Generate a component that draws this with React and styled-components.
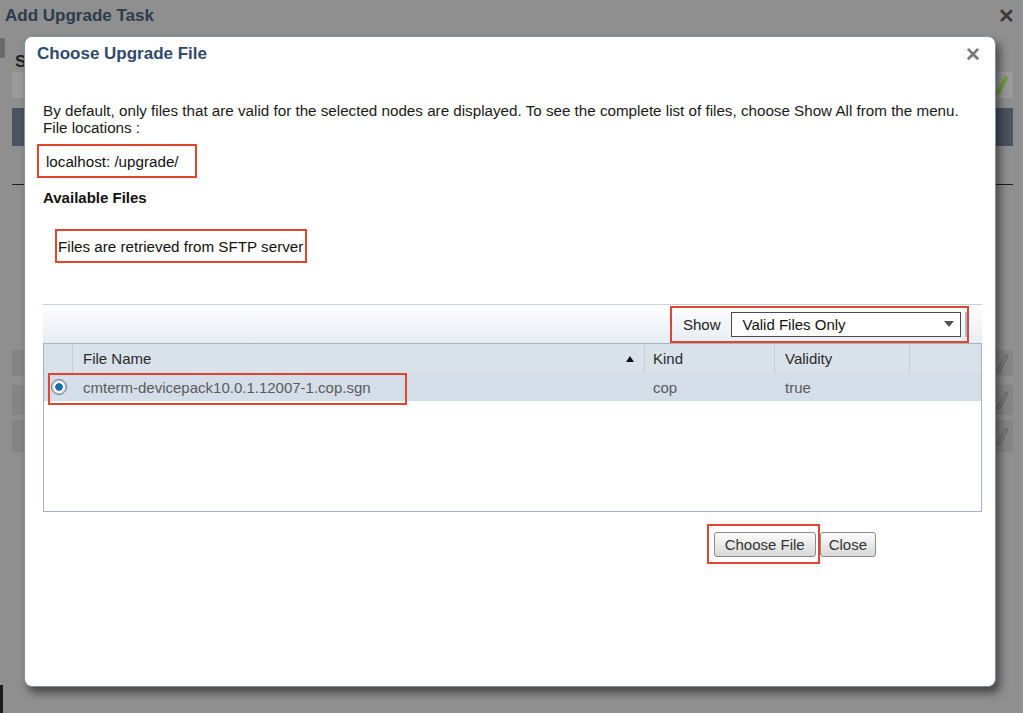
import React from 'react';
import styled, { createGlobalStyle } from 'styled-components';

const GlobalStyle = createGlobalStyle`
html, body {
  margin: 0;
  padding: 0;
  width: 1023px;
  height: 713px;
  overflow: hidden;
  background: #8f8f8f;
  font-family: "Liberation Sans", Arial, sans-serif;
}
`

/* ---- page behind the dialog (dimmed) ---- */
const Page = styled.div`
position: relative;
width: 1023px;
height: 713px;
background: #8f8f8f;
display: flex;
flex-direction: column;
`
const PageHeader = styled.div`
height: 32px;
display: flex;
align-items: center;
justify-content: space-between;
padding: 0 8px 0 5px;
`
const PageTitle = styled.div`
font-size: 17px;
font-weight: bold;
color: #2e3b4b;
`
const PageClose = styled.div`
font-size: 20px;
font-weight: bold;
color: #3a3a3a;
line-height: 1;
`
const PageBody = styled.div`
display: flex;
flex-direction: column;
padding: 6px 10px 0 0;
`
const SideTab = styled.div`
width: 5px;
height: 20px;
background: #6b6b6b;
`
const SectionLetter = styled.div`
margin: -6px 0 0 15px;
font-size: 17px;
font-weight: bold;
color: #222;
`
const BgRow = styled.div`
margin: ${({ top }) => top}px 0 0 12px;
height: ${({ h }) => h}px;
background: ${({ tone }) => tone};
display: flex;
align-items: center;
justify-content: flex-end;
padding-right: 4px;
`
const BgRule = styled.div`
margin: ${({ top }) => top}px 0 0 12px;
height: 1px;
background: #1e1e1e;
`
const Footer = styled.div`
margin-top: auto;
width: 3px;
height: 28px;
background: #1a1a1a;
`

function Pencil({ green }) {
  return (
    <svg width="14" height="20" viewBox="0 0 14 20">
      {green ? (
        <path d="M3 18 L11 3" stroke="#6fa23a" strokeWidth="4" strokeLinecap="round" fill="none" />
      ) : (
        <path d="M2 18 L10 3 Q12 1 12.5 4 L4.5 19 Z" stroke="#6a6a6a" strokeWidth="1.2" fill="none" />
      )}
    </svg>
  );
}

/* ---- dialog ---- */
const Dialog = styled.div`
position: absolute;
left: 24px;
top: 36px;
width: 970px;
height: 649px;
background: #fff;
border: 1px solid #7d8fa3;
border-radius: 8px;
box-shadow: 4px 6px 8px rgba(0, 0, 0, 0.5);
display: flex;
flex-direction: column;
`
const DialogHeader = styled.div`
height: 34px;
display: flex;
align-items: center;
justify-content: space-between;
padding: 0 14px 0 12px;
`
const DialogTitle = styled.div`
font-size: 17px;
font-weight: bold;
color: #2f4a6a;
`
const CloseX = styled.div`
font-size: 19px;
font-weight: bold;
color: #7a7a7a;
line-height: 1;
`
const DialogBody = styled.div`
padding: 0 13px 0 18px;
display: flex;
flex-direction: column;
`
const Intro = styled.div`
margin-top: 31px;
font-size: 15.2px;
line-height: 17px;
color: #1a1a1a;
`
const Callout = styled.div`
align-self: flex-start;
border: 2px solid #e2452f;
margin: ${({ m }) => m};
width: ${({ w }) => w}px;
height: ${({ h }) => h}px;
padding-left: ${({ pl }) => pl}px;
box-sizing: border-box;
display: flex;
align-items: center;
font-size: 15.2px;
color: #111;
`
const SectionHeading = styled.div`
margin-top: 11px;
font-size: 15px;
font-weight: bold;
line-height: 17px;
color: #111;
`
const Toolbar = styled.div`
margin-top: 41px;
height: 39px;
border-top: 1px solid #c9d2da;
background: linear-gradient(#fdfeff, #e7edf3);
display: flex;
justify-content: flex-end;
align-items: center;
padding-right: 13px;
box-sizing: border-box;
`
const ShowBox = styled.div`
height: 37px;
width: 299px;
box-sizing: border-box;
border: 2px solid #e2452f;
display: flex;
align-items: center;
padding-left: 11px;
gap: 10px;
font-size: 15px;
color: #222;
`
const Select = styled.div`
width: 230px;
height: 25px;
box-sizing: border-box;
border: 1px solid #4b4b4b;
background: #fff;
display: flex;
align-items: center;
justify-content: space-between;
padding: 0 6px 0 11px;
font-size: 15px;
color: #111;
`
const Caret = styled.span`
width: 0;
height: 0;
border-left: 5px solid transparent;
border-right: 5px solid transparent;
border-top: 6px solid #555;
`
const Splitter = styled.div`
width: 2px;
height: 25px;
margin-left: -6px;
background: #a9bccd;
`
const Grid = styled.div`
height: 167px;
border: 1px solid #a6b3c0;
display: flex;
flex-direction: column;
`
const GridRow = styled.div`
position: relative;
display: grid;
grid-template-columns: 29px 572px 130px 135px 1fr;
height: ${({ head }) => (head ? 29 : 28)}px;
background: ${({ head }) => (head ? '#d9e2ea' : '#d4dee8')};
font-size: 15px;
color: ${({ head }) => (head ? '#2a2a2a' : '#5b5b5b')};
`
const Cell = styled.div`
display: flex;
align-items: center;
justify-content: ${({ center }) => (center ? 'center' : 'space-between')};
padding: 0 ${({ pr }) => pr || 0}px 0 ${({ pl }) => pl || 0}px;
border-right: ${({ sep }) => (sep ? '1px solid #c3ced9' : 'none')};
`
const SortUp = styled.span`
width: 0;
height: 0;
border-left: 4px solid transparent;
border-right: 4px solid transparent;
border-bottom: 6px solid #111;
`
const Radio = styled.span`
width: 16px;
height: 16px;
box-sizing: border-box;
border-radius: 50%;
border: 1px solid #6f7b88;
background: radial-gradient(circle, #1b6fae 0 3.5px, #fff 4px, #e6eaee 7px);
box-shadow: inset 0 0 2px #8c98a4;
`
const RowMark = styled.div`
position: absolute;
left: 4px;
top: 0;
width: 359px;
height: 32px;
box-sizing: border-box;
border: 2px solid #e2452f;
`
const Actions = styled.div`
margin-top: 12px;
display: flex;
justify-content: flex-end;
align-items: center;
padding-right: 106px;
`
const ButtonMark = styled.div`
width: 113px;
height: 40px;
box-sizing: border-box;
border: 2px solid #e2452f;
padding: 6px 0 0 5px;
`
const Button = styled.button`
height: 25px;
padding: 0 ${({ wide }) => (wide ? 10 : 8)}px;
border: 1px solid #8a8a8a;
border-radius: 3px;
background: linear-gradient(#fbfbfb, #d9d9d9);
font-family: "Liberation Sans", Arial, sans-serif;
font-size: 15px;
color: #333;
`

export default function App() {
  return (
    <>
      <GlobalStyle />
      <Page>
        <PageHeader>
          <PageTitle>Add Upgrade Task</PageTitle>
          <PageClose>✕</PageClose>
        </PageHeader>
        <PageBody>
          <SideTab />
          <SectionLetter>S</SectionLetter>
          <BgRow top={0} h={26} tone="#9b9b9b"><Pencil green /></BgRow>
          <BgRow top={10} h={38} tone="#4b5361" />
          <BgRule top={38} />
          <BgRow top={165} h={26} tone="#858585"><Pencil /></BgRow>
          <BgRow top={9} h={30} tone="#858585"><Pencil /></BgRow>
          <BgRow top={5} h={32} tone="#858585"><Pencil /></BgRow>
        </PageBody>
        <Footer />

        <Dialog>
          <DialogHeader>
            <DialogTitle>Choose Upgrade File</DialogTitle>
            <CloseX>✕</CloseX>
          </DialogHeader>
          <DialogBody>
            <Intro>
              By default, only files that are valid for the selected nodes are displayed. To see the complete list of files, choose Show All from the menu.
              <br />
              File locations :
            </Intro>
            <Callout m="8px 0 0 -6px" w={160} h={34} pl={7}>localhost: /upgrade/</Callout>
            <SectionHeading>Available Files</SectionHeading>
            <Callout m="23px 0 0 12px" w={252} h={34} pl={1}>Files are retrieved from SFTP server</Callout>

            <Toolbar>
              <ShowBox>
                Show
                <Select>
                  Valid Files Only
                  <Caret />
                </Select>
                <Splitter />
              </ShowBox>
            </Toolbar>

            <Grid>
              <GridRow head>
                <Cell sep />
                <Cell sep pl={10} pr={10}>File Name<SortUp /></Cell>
                <Cell sep pl={8}>Kind</Cell>
                <Cell sep pl={10}>Validity</Cell>
                <Cell />
              </GridRow>
              <GridRow>
                <Cell center><Radio /></Cell>
                <Cell pl={10}>cmterm-devicepack10.0.1.12007-1.cop.sgn</Cell>
                <Cell pl={8}>cop</Cell>
                <Cell pl={10}>true</Cell>
                <Cell />
                <RowMark />
              </GridRow>
            </Grid>

            <Actions>
              <ButtonMark>
                <Button wide>Choose File</Button>
              </ButtonMark>
              <Button>Close</Button>
            </Actions>
          </DialogBody>
        </Dialog>
      </Page>
    </>
  );
}
